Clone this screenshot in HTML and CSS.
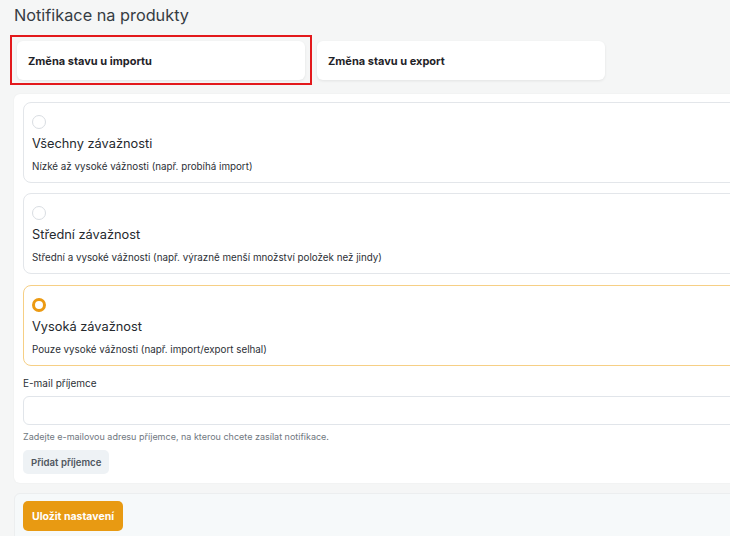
FILE: index.html
```html
<!DOCTYPE html>
<html lang="cs">
<head>
    <meta charset="UTF-8">
    <meta name="viewport" content="width=device-width, initial-scale=1.0">
    <title>Notifikace na produkty</title>
    <link rel="stylesheet" href="styles.css">
</head>
<body>
    <div class="page">
        <h1 class="title">Notifikace na produkty</h1>

        <!-- Tabs -->
        <div class="tabs">
            <div class="tab-highlight">
                <div class="tab">Změna stavu u importu</div>
            </div>
            <div class="tab tab-second">Změna stavu u export</div>
        </div>

        <!-- Settings panel -->
        <div class="panel">
            <div class="option">
                <span class="radio"></span>
                <div class="option-title">Všechny závažnosti</div>
                <div class="option-desc">Nízké až vysoké vážnosti (např. probíhá import)</div>
            </div>
            <div class="option option-middle">
                <span class="radio"></span>
                <div class="option-title">Střední závažnost</div>
                <div class="option-desc">Střední a vysoké vážnosti (např. výrazně menší množství položek než jindy)</div>
            </div>
            <div class="option option-active">
                <span class="radio"></span>
                <div class="option-title">Vysoká závažnost</div>
                <div class="option-desc">Pouze vysoké vážnosti (např. import/export selhal)</div>
            </div>

            <label class="field-label" for="email">E-mail příjemce</label>
            <input class="field-input" type="text" id="email">
            <div class="field-help">Zadejte e-mailovou adresu příjemce, na kterou chcete zasílat notifikace.</div>
            <button class="btn-secondary">Přidat příjemce</button>
        </div>

        <!-- Footer -->
        <div class="footer">
            <button class="btn-primary">Uložit nastavení</button>
        </div>
    </div>
</body>
</html>
```

FILE: styles.css
```css
html, body {
    margin: 0;
    padding: 0;
    overflow: hidden;
}

body {
    font-family: 'Inter', 'Liberation Sans', sans-serif;
    background-color: #f5f6f6;
    color: #24282d;
    width: 730px;
    height: 536px;
}

.page {
    padding: 4px 0 0 14px;
    width: 760px;
}

.title {
    font-size: 16.3px;
    font-weight: 400;
    color: #363c43;
    margin: 0 0 9px 0;
    line-height: 22px;
}

/* Tabs */
.tabs {
    display: flex;
    align-items: center;
    gap: 5px;
    margin-left: -4px;
}

.tab-highlight {
    border: 2px solid #e3191c;
    padding: 4px 5px 3px 5px;
}

.tab {
    width: 288px;
    height: 39px;
    box-sizing: border-box;
    background: white;
    border-radius: 6px;
    box-shadow: 0 1px 3px rgba(0, 0, 0, 0.08);
    font-size: 11px;
    font-weight: 700;
    color: #1f2328;
    display: flex;
    align-items: center;
    padding-left: 11px;
}

.tab-second {
    margin-top: 1px;
}

/* Panel */
.panel {
    background: white;
    border-radius: 6px;
    margin-top: 9px;
    padding: 8px 9px 9px 9px;
    box-shadow: 0 0 2px rgba(0, 0, 0, 0.06);
}

.option {
    border: 1px solid #e3e6ea;
    border-radius: 8px;
    padding: 12px 9px 8px 8px;
    margin-bottom: 10px;
    height: 59px;
}

.option-middle {
    margin-bottom: 11px;
}

.option-active {
    border-color: #f6cf85;
    margin-bottom: 9px;
}

.radio {
    display: block;
    width: 12px;
    height: 12px;
    border: 1px solid #d9dde2;
    border-radius: 50%;
}

.option-active .radio {
    width: 8px;
    height: 8px;
    border: 3px solid #ec9a12;
}

.option-title {
    font-size: 12.8px;
    color: #25292e;
    margin-top: 6px;
    line-height: 18px;
}

.option-desc {
    font-size: 9.8px;
    color: #2c3036;
    margin-top: 8px;
    line-height: 12px;
}

.field-label {
    display: block;
    font-size: 10px;
    color: #2c3036;
    margin-top: 10px;
    line-height: 14px;
}

.field-input {
    display: block;
    box-sizing: border-box;
    width: 100%;
    height: 29px;
    margin-top: 6px;
    border: 1px solid #e1e5ea;
    border-radius: 6px;
    background: white;
}

.field-help {
    font-size: 9px;
    color: #707780;
    margin-top: 6px;
    line-height: 12px;
}

.btn-secondary {
    margin-top: 7px;
    background: #eef2f5;
    border: none;
    border-radius: 5px;
    padding: 0 8px;
    height: 24px;
    font-family: inherit;
    font-size: 9.6px;
    font-weight: 600;
    color: #4f565e;
}

/* Footer */
.footer {
    margin-top: 10px;
    background: #f6f9fa;
    border: 1px solid #eceeef;
    border-radius: 6px;
    padding: 7px 9px 10px 8px;
}

.btn-primary {
    background: #e89a12;
    color: white;
    border: none;
    border-radius: 5px;
    height: 30px;
    padding: 0 9px;
    font-family: inherit;
    font-size: 10.5px;
    font-weight: 700;
}
```
